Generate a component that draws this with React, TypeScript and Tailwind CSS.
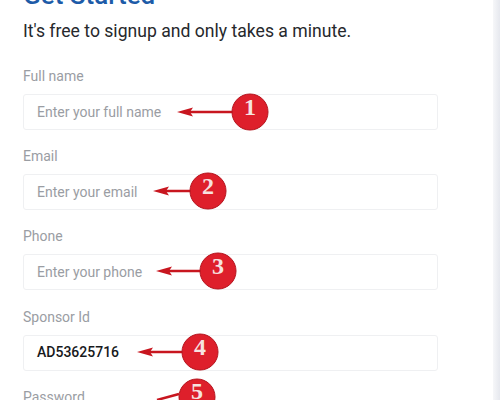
const fields = [
  { label: "Full name", placeholder: "Enter your full name", n: "1", arrowFrom: 233, arrowTo: 177, cx: 250, cy: 18 },
  { label: "Email", placeholder: "Enter your email", n: "2", arrowFrom: 192, arrowTo: 153, cx: 208, cy: 17 },
  { label: "Phone", placeholder: "Enter your phone", n: "3", arrowFrom: 204, arrowTo: 156, cx: 218, cy: 17 },
  { label: "Sponsor Id", value: "AD53625716", n: "4", arrowFrom: 182, arrowTo: 137, cx: 200, cy: 17 },
];

function Marker({
  n,
  arrowFrom,
  arrowTo,
  cx,
  cy,
}: {
  n: string;
  arrowFrom: number;
  arrowTo: number;
  cx: number;
  cy: number;
}) {
  return (
    <svg width="300" height="60" viewBox="0 0 300 60" className="absolute left-[-24px] top-[-13px] pointer-events-none">
      <path d={`M${arrowFrom} ${cy + 12}L${arrowTo + 13} ${cy + 12}`} stroke="#c8161f" strokeWidth="2.5" />
      <path d={`M${arrowTo} ${cy + 12}L${arrowTo + 16} ${cy + 7.5}L${arrowTo + 13} ${cy + 12}L${arrowTo + 16} ${cy + 16.5}Z`} fill="#c8161f" />
      <circle cx={cx} cy={cy + 12} r="18" fill="#de1f2b" stroke="#b5141e" strokeWidth="1" />
      <text
        x={cx}
        y={cy + 15}
        textAnchor="middle"
        fill="#f6e3e0"
        fontSize="24"
        fontWeight="700"
        fontFamily="'Liberation Serif', serif"
      >
        {n}
      </text>
    </svg>
  );
}

export default function App() {
  return (
    <div className="relative h-[400px] w-[500px] overflow-hidden bg-white font-['Roboto',sans-serif]">
      <div className="absolute right-0 top-0 h-full w-[7px] bg-gradient-to-r from-[#f6f7f9] to-[#e6e8ee]" />
      <div className="ml-[23px] mt-[-20px] w-[415px]">
        <h1 className="text-[26px] leading-[30px] font-medium text-[#1d5ba8]">Get Started</h1>
        <p className="mt-[9px] text-[17.6px] leading-[24px] text-[#26282c]">
          It's free to signup and only takes a minute.
        </p>
        <div className="mt-[24px] flex flex-col gap-[17.2px]">
          {fields.map((f) => (
            <div key={f.label}>
              <div className="h-[18px] text-[14px] leading-[18px] text-[#9a9da3]">{f.label}</div>
              <div className="relative mt-[9px] flex h-[36px] items-center rounded-[3px] border border-[#eff0f2] px-[13px] text-[14px]">
                {f.value ? (
                  <span className="font-medium text-[#17191c]">{f.value}</span>
                ) : (
                  <span className="text-[#9a9da3]">{f.placeholder}</span>
                )}
                <Marker n={f.n} arrowFrom={f.arrowFrom} arrowTo={f.arrowTo} cx={f.cx} cy={f.cy} />
              </div>
            </div>
          ))}
          <div className="relative">
            <div className="h-[18px] text-[14px] leading-[18px] text-[#9a9da3]">Password</div>
            <svg width="120" height="60" viewBox="0 0 120 60" className="absolute left-[120px] top-[-10px] pointer-events-none">
              <path d="M14 22L36 16" stroke="#c8161f" strokeWidth="2.5" />
              <circle cx="54" cy="19" r="18" fill="#de1f2b" stroke="#b5141e" strokeWidth="1" />
              <text x="54" y="21" textAnchor="middle" fill="#f6e3e0" fontSize="24" fontWeight="700" fontFamily="'Liberation Serif', serif">
                5
              </text>
            </svg>
          </div>
        </div>
      </div>
    </div>
  );
}
